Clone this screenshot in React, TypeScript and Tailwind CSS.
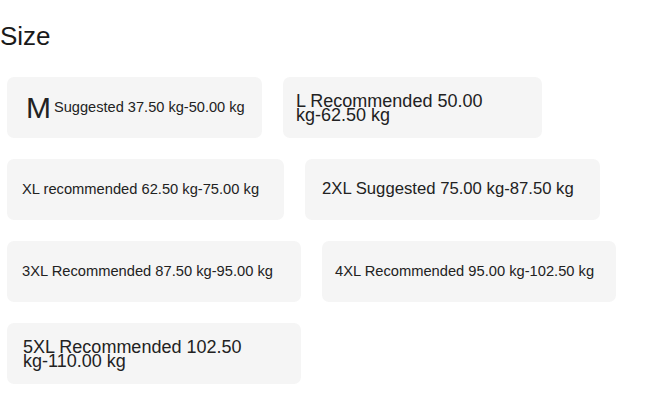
const sizes = [
  { key: "M", width: "w-[255px]", pad: "pl-[19px]" },
  { key: "L", width: "w-[259px]", pad: "pl-[13px]" },
  { key: "XL", width: "w-[277px]", pad: "pl-[15px]" },
  { key: "2XL", width: "w-[295px]", pad: "pl-[17px]" },
  { key: "3XL", width: "w-[294px]", pad: "pl-[15px]" },
  { key: "4XL", width: "w-[294px]", pad: "pl-[13px]" },
  { key: "5XL", width: "w-[294px]", pad: "pl-[16px]" },
];

function Label({ size }: { size: string }) {
  if (size === "M") {
    return (
      <span className="flex items-center">
        <span className="text-[30px] leading-none">M</span>
        <span className="ml-[3px] text-[14.6px] leading-none">Suggested 37.50 kg-50.00 kg</span>
      </span>
    );
  }
  if (size === "L") {
    return <span className="w-[200px] text-[18px] leading-[14px]">L Recommended 50.00 kg-62.50 kg</span>;
  }
  if (size === "XL") {
    return <span className="text-[14.7px] leading-none">XL recommended 62.50 kg-75.00 kg</span>;
  }
  if (size === "2XL") {
    return <span className="text-[16.7px] leading-none">2XL Suggested 75.00 kg-87.50 kg</span>;
  }
  if (size === "3XL") {
    return <span className="text-[14.7px] leading-none">3XL Recommended 87.50 kg-95.00 kg</span>;
  }
  if (size === "4XL") {
    return <span className="text-[14.7px] leading-none">4XL Recommended 95.00 kg-102.50 kg</span>;
  }
  return <span className="w-[232px] text-[18px] leading-[14px]">5XL Recommended 102.50 kg-110.00 kg</span>;
}

export default function App() {
  return (
    <div className="min-h-screen bg-white text-[#222] [font-family:'Liberation_Sans',Arial,sans-serif]">
      <h2 className="pt-[20px] text-[26px] leading-[32px] text-[#1a1a1a]">Size</h2>
      <div className="mt-[25px] flex flex-wrap gap-[21px] pl-[7px]">
        {sizes.map((s) => (
          <div
            key={s.key}
            className={`${s.width} ${s.pad} flex h-[61px] items-center rounded-[7px] bg-[#f5f5f5]`}
          >
            <Label size={s.key} />
          </div>
        ))}
      </div>
    </div>
  );
}
